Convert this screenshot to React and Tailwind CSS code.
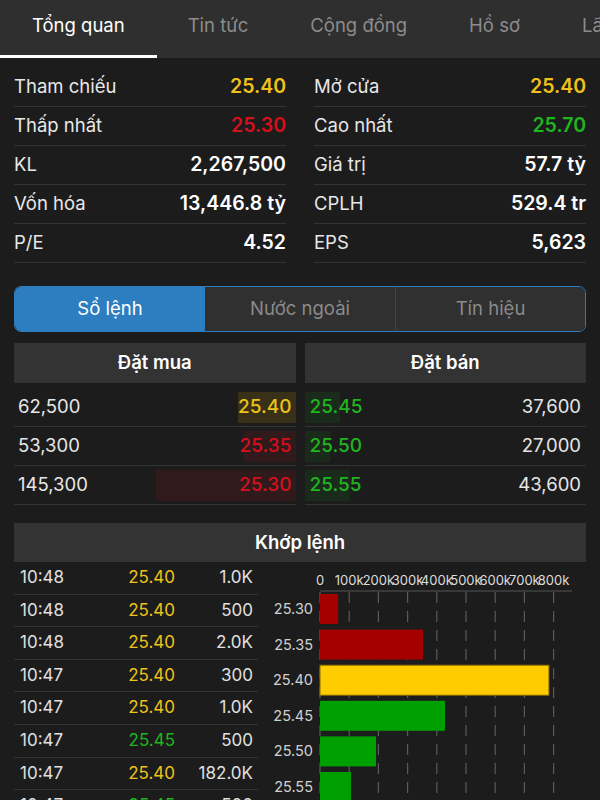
const yellow = "text-[#eec21a]"
const red = "text-[#d3101c]"
const green = "text-[#1fb51f]"

const stats = [
  { l: "Tham chiếu", v: "25.40", c: yellow, r: "Mở cửa", rv: "25.40", rc: yellow },
  { l: "Thấp nhất", v: "25.30", c: red, r: "Cao nhất", rv: "25.70", rc: green },
  { l: "KL", v: "2,267,500", c: "text-white", r: "Giá trị", rv: "57.7 tỷ", rc: "text-white" },
  { l: "Vốn hóa", v: "13,446.8 tỷ", c: "text-white", r: "CPLH", rv: "529.4 tr", rc: "text-white" },
  { l: "P/E", v: "4.52", c: "text-white", r: "EPS", rv: "5,623", rc: "text-white" },
]

const buys = [
  { vol: "62,500", price: "25.40", c: yellow, bar: "bg-[#383117]", w: 58 },
  { vol: "53,300", price: "25.35", c: red, bar: "bg-[#311a1c]", w: 52 },
  { vol: "145,300", price: "25.30", c: red, bar: "bg-[#311a1c]", w: 140 },
]

const sells = [
  { vol: "37,600", price: "25.45", w: 35 },
  { vol: "27,000", price: "25.50", w: 25 },
  { vol: "43,600", price: "25.55", w: 45 },
]

const trades = [
  ["10:48", "25.40", "1.0K", yellow],
  ["10:48", "25.40", "500", yellow],
  ["10:48", "25.40", "2.0K", yellow],
  ["10:47", "25.40", "300", yellow],
  ["10:47", "25.40", "1.0K", yellow],
  ["10:47", "25.45", "500", green],
  ["10:47", "25.40", "182.0K", yellow],
  ["10:47", "25.45", "500", green],
]

const chartBars = [
  { p: "25.30", v: 62, fill: "#a50000" },
  { p: "25.35", v: 353, fill: "#a50000" },
  { p: "25.40", v: 784, fill: "#ffcc00", stroke: "#8a6d00" },
  { p: "25.45", v: 428, fill: "#009f00" },
  { p: "25.50", v: 192, fill: "#009f00" },
  { p: "25.55", v: 106, fill: "#009f00" },
]

function VolumeChart() {
  const x0 = 62
  const step = 29.2
  const ticks = [0, 1, 2, 3, 4, 5, 6, 7, 8]
  return (
    <svg width="327" height="238" className="block">
      {ticks.map((t) => (
        <line
          key={`g${t}`}
          x1={x0 + t * step}
          x2={x0 + t * step}
          y1={30}
          y2={238}
          stroke="#5a5a5a"
          strokeWidth="1.2"
          strokeDasharray="11 8"
        />
      ))}
      <line x1={x0} x2={314} y1={29} y2={29} stroke="#555" strokeWidth="1" />
      {ticks.map((t) => (
        <text
          key={`t${t}`}
          x={x0 + t * step}
          y={22.5}
          fill="#dcdcdc"
          fontSize="13"
          textAnchor="middle"
        >
          {t === 0 ? "0" : `${t * 100}k`}
        </text>
      ))}
      {chartBars.map((b, i) => {
        const y = 32 + i * 35.6
        return (
          <g key={b.p}>
            <rect
              x={x0}
              y={y}
              width={(b.v / 100) * step}
              height={30}
              fill={b.fill}
              stroke={b.stroke || "none"}
              strokeWidth="1"
            />
            <text x={55} y={y + 20} fill="#d0d0d0" fontSize="14.5" textAnchor="end">
              {b.p}
            </text>
          </g>
        )
      })}
    </svg>
  )
}

export default function App() {
  return (
    <div
      className="relative h-[800px] w-[600px] overflow-hidden bg-[#1c1c1c] text-white"
      style={{ fontFamily: "Inter, 'Liberation Sans', sans-serif" }}
    >
      <nav className="flex h-[58px] bg-[#2f2f2f] whitespace-nowrap">
        <div className="relative px-[32px] pt-[12px] text-[18.5px] leading-[26px] text-white">
          Tổng quan
          <span className="absolute bottom-0 left-0 right-0 h-[3px] bg-white" />
        </div>
        <div className="px-[31px] pt-[12px] text-[18.5px] leading-[26px] text-[#8c8c8c]">Tin tức</div>
        <div className="px-[31px] pt-[12px] text-[18.5px] leading-[26px] text-[#8c8c8c]">Cộng đồng</div>
        <div className="px-[31px] pt-[12px] text-[18.5px] leading-[26px] text-[#8c8c8c]">Hồ sơ</div>
        <div className="px-[31px] pt-[12px] text-[18.5px] leading-[26px] text-[#8c8c8c]">Lãnh đạo</div>
      </nav>

      <div className="px-[14px]">
        <div className="mt-[10px] grid grid-cols-2 gap-x-[28px]">
          {stats.map((s) => (
            <div key={s.l} className="contents">
              <div className="flex h-[39px] items-center justify-between border-b border-[#343434] text-[18.5px]">
                <span className="text-[#e8e8e8]">{s.l}</span>
                <span className={`text-[19.5px] font-semibold ${s.c}`}>{s.v}</span>
              </div>
              <div className="flex h-[39px] items-center justify-between border-b border-[#343434] text-[18.5px]">
                <span className="text-[#e8e8e8]">{s.r}</span>
                <span className={`text-[19.5px] font-semibold ${s.rc}`}>{s.rv}</span>
              </div>
            </div>
          ))}
        </div>

        <div className="mt-[23px] grid h-[46px] grid-cols-3 overflow-hidden rounded-[7px] border-[1.5px] border-[#2c7bbd] text-[18.5px]">
          <div className="flex items-center justify-center bg-[#2d7ec0] text-white">Sổ lệnh</div>
          <div className="flex items-center justify-center bg-[#303030] text-[#8a8a8a]">Nước ngoài</div>
          <div className="flex items-center justify-center border-l border-[#444] bg-[#303030] text-[#8a8a8a]">
            Tín hiệu
          </div>
        </div>

        <div className="mt-[11px] grid grid-cols-2 gap-x-[9px]">
          <div>
            <div className="flex h-[40px] items-center justify-center bg-[#333333] text-[18.5px] font-semibold">
              Đặt mua
            </div>
            <div className="pt-[5px]">
              {buys.map((b) => (
                <div
                  key={b.vol}
                  className="relative flex h-[39px] items-center justify-between border-b border-[#343434] pl-[4px] pr-[4px] text-[18.5px]"
                >
                  <span
                    className={`absolute bottom-[3px] right-0 top-[4px] ${b.bar}`}
                    style={{ width: `${b.w}px` }}
                  />
                  <span className="relative text-[#e6e6e6]">{b.vol}</span>
                  <span className={`relative text-[19px] font-medium ${b.c}`}>{b.price}</span>
                </div>
              ))}
            </div>
          </div>
          <div>
            <div className="flex h-[40px] items-center justify-center bg-[#333333] text-[18.5px] font-semibold">
              Đặt bán
            </div>
            <div className="pt-[5px]">
              {sells.map((s) => (
                <div
                  key={s.vol}
                  className="relative flex h-[39px] items-center justify-between border-b border-[#343434] px-[5px] text-[18.5px]"
                >
                  <span
                    className="absolute bottom-[3px] left-0 top-[4px] bg-[#1b2b1b]"
                    style={{ width: `${s.w}px` }}
                  />
                  <span className={`relative text-[19px] font-medium ${green}`}>{s.price}</span>
                  <span className="relative text-[#e6e6e6]">{s.vol}</span>
                </div>
              ))}
            </div>
          </div>
        </div>

        <div className="mt-[18px] flex h-[39px] items-center justify-center bg-[#333333] text-[18.5px] font-semibold">
          Khớp lệnh
        </div>

        <div className="flex">
          <div className="w-[244px] shrink-0">
            {trades.map((t, i) => (
              <div
                key={i}
                className="grid h-[32.6px] grid-cols-[1fr_80px_78px] items-center border-b border-[#343434] pl-[6px] pr-[5px] text-[17px]"
              >
                <span className="text-[#e0e0e0]">{t[0]}</span>
                <span className={`text-right ${t[3]}`}>{t[1]}</span>
                <span className="text-right text-[#e0e0e0]">{t[2]}</span>
              </div>
            ))}
          </div>
          <div className="flex-1">
            <VolumeChart />
          </div>
        </div>
      </div>
    </div>
  )
}
